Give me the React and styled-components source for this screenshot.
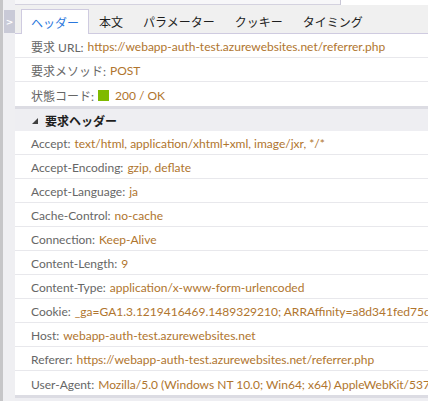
import React from "react";
import styled, { createGlobalStyle } from "styled-components";

const GlobalStyle = createGlobalStyle`
  html, body {
    margin: 0;
    padding: 0;
    background: #eeeef2;
    overflow: hidden;
  }
  * {
    box-sizing: border-box;
  }
`;

const Frame = styled.div`
  display: flex;
  width: 428px;
  height: 401px;
  font-family: Lato, "Noto Sans CJK JP", sans-serif;
  font-size: 12px;
  overflow: hidden;
`;

const LeftRail = styled.div`
  width: 3px;
  flex-shrink: 0;
  background: #c6c6c8;
`;

const SideStrip = styled.div`
  width: 12px;
  flex-shrink: 0;
  background: #efeff2;
  padding-top: 10px;
  display: flex;
  flex-direction: column;
  align-items: stretch;
`;

const CollapseButton = styled.div`
  height: 23px;
  margin-left: 1px;
  background: #c9cad7;
  color: #ffffff;
  display: flex;
  align-items: center;
  justify-content: center;
  font-family: "DejaVu Sans", sans-serif;
  font-size: 9px;
  font-weight: bold;
`;

const Main = styled.div`
  flex: 1;
  min-width: 0;
  display: flex;
  flex-direction: column;
  background: #eeeef2;
`;

const TopStrip = styled.div`
  height: 5px;
  display: flex;
  justify-content: flex-end;
  background: #f7f7f9;
  border-bottom: 1px solid #d4d2df;
`;

const SearchStub = styled.div`
  width: 88px;
  height: 5px;
  background: #ffffff;
  border-left: 1px solid #c9c7d6;
`;

const TabBar = styled.div`
  height: 29px;
  display: flex;
  align-items: flex-end;
  padding-left: 6px;
  background: #f0f0f0;
  border-bottom: 1px solid #cfcbe0;
`;

const Tab = styled.div`
  height: ${(p) => (p.$active ? "25px" : "24px")};
  margin-bottom: ${(p) => (p.$active ? "-1px" : "0")};
  padding: 0 9px;
  display: flex;
  align-items: center;
  font-family: "Noto Sans CJK JP", sans-serif;
  font-size: 12px;
  color: ${(p) => (p.$active ? "#2a77dc" : "#1e1e1e")};
  background: ${(p) => (p.$active ? "#ffffff" : "transparent")};
  border: 1px solid ${(p) => (p.$active ? "#cfcbe0" : "transparent")};
  border-bottom: none;
  white-space: nowrap;
`;

const Section = styled.div`
  background: #ffffff;
  border-bottom: 3px solid #dcdce3;
`;

const SectionHead = styled.div`
  height: 22px;
  display: flex;
  align-items: center;
  gap: 7px;
  padding-left: 17px;
  padding-top: 1px;
  background: #eeeef2;
  font-family: "Noto Sans CJK JP", sans-serif;
  font-weight: bold;
  color: #1e1e1e;
`;

const Twisty = styled.svg`
  width: 6px;
  height: 6px;
  flex-shrink: 0;
`;

const Row = styled.div`
  height: 24px;
  display: flex;
  align-items: center;
  padding-left: 16px;
  padding-top: 2px;
  border-bottom: 1px solid #e8e8ec;
  white-space: nowrap;
  overflow: hidden;
  &:last-child {
    border-bottom: none;
  }
`;

const Label = styled.span`
  color: #666666;
  flex-shrink: 0;
`;

const Value = styled.span`
  color: #b0752e;
  margin-left: 4px;
  display: flex;
  align-items: center;
  gap: 6px;
`;

const StatusSquare = styled.span`
  display: inline-block;
  width: 11px;
  height: 11px;
  background: #7fba00;
`;

const tabs = ["ヘッダー", "本文", "パラメーター", "クッキー", "タイミング"];

const general = [
  ["要求 URL:", "https://webapp-auth-test.azurewebsites.net/referrer.php"],
  ["要求メソッド:", "POST"],
  ["状態コード:", "200 / OK", true],
];

const requestHeaders = [
  ["Accept:", "text/html, application/xhtml+xml, image/jxr, */*"],
  ["Accept-Encoding:", "gzip, deflate"],
  ["Accept-Language:", "ja"],
  ["Cache-Control:", "no-cache"],
  ["Connection:", "Keep-Alive"],
  ["Content-Length:", "9"],
  ["Content-Type:", "application/x-www-form-urlencoded"],
  [
    "Cookie:",
    "_ga=GA1.3.1219416469.1489329210; ARRAffinity=a8d341fed75dfa7c2e6b0e4f1d1a93c8b6a0e1f3d47c5b2a9e8f6d1c0b3a7e52",
  ],
  ["Host:", "webapp-auth-test.azurewebsites.net"],
  ["Referer:", "https://webapp-auth-test.azurewebsites.net/referrer.php"],
  [
    "User-Agent:",
    "Mozilla/5.0 (Windows NT 10.0; Win64; x64) AppleWebKit/537.36 (KHTML, like Gecko) Chrome/51.0.2704.79 Safari/537.36 Edge/14.14393",
  ],
];

const App = () => {
  return (
    <>
      <GlobalStyle />
      <Frame>
        <LeftRail />
        <SideStrip>
          <CollapseButton>&gt;</CollapseButton>
        </SideStrip>
        <Main>
          <TopStrip>
            <SearchStub />
          </TopStrip>
          <TabBar>
            {tabs.map((t, i) => (
              <Tab key={t} $active={i === 0}>
                {t}
              </Tab>
            ))}
          </TabBar>
          <Section>
            {general.map(([label, value, status]) => (
              <Row key={label}>
                <Label>{label}</Label>
                <Value>
                  {status && <StatusSquare />}
                  {value}
                </Value>
              </Row>
            ))}
          </Section>
          <Section>
            <SectionHead>
              <Twisty viewBox="0 0 6 6">
                <polygon points="6,0 6,6 0,6" fill="#404040" />
              </Twisty>
              要求ヘッダー
            </SectionHead>
            {requestHeaders.map(([label, value]) => (
              <Row key={label}>
                <Label>{label}</Label>
                <Value>{value}</Value>
              </Row>
            ))}
          </Section>
        </Main>
      </Frame>
    </>
  );
};

export default App;
